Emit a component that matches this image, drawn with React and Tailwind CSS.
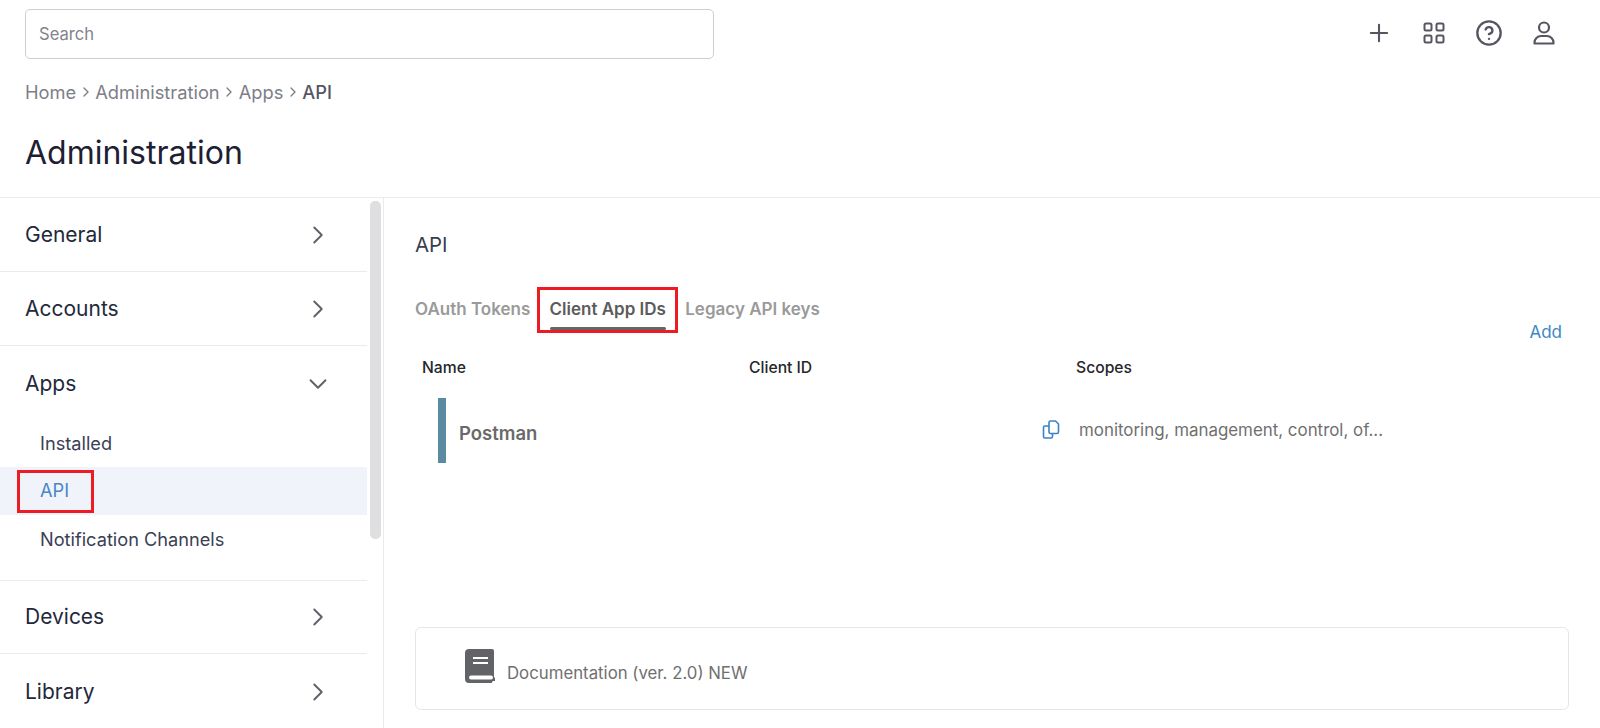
import { Plus, ChevronRight, ChevronDown, CircleHelp } from 'lucide-react';

function NavRow({ label, height = 'h-[73px] border-b border-[#ebebeb]' }) {
    return (
        <div className={`flex items-center justify-between pl-[25px] pr-[34px] ${height}`}>
            <span className="text-[21px] font-normal text-[#23283a]">{label}</span>
            <ChevronRight className="w-[30px] h-[30px] text-[#5f6068]" strokeWidth={1.5} />
        </div>
    );
}

function AppsIcon() {
    return (
        <svg width="22" height="22" viewBox="0 0 22 22" fill="none" stroke="#555662" strokeWidth="2">
            <rect x="1.500" y="1.500" width="7" height="7" rx="1.500" />
            <rect x="13.500" y="1.500" width="7" height="7" rx="1.500" />
            <rect x="1.500" y="13.500" width="7" height="7" rx="1.500" />
            <rect x="13.500" y="13.500" width="7" height="7" rx="1.500" />
        </svg>
    );
}

function UserIcon() {
    return (
        <svg width="22" height="24" viewBox="0 0 22 24" fill="none" stroke="#555662" strokeWidth="2.200">
            <circle cx="11" cy="6.500" r="5" />
            <path d="M1.500 22.500v-1a6.500 6.500 0 0 1 6.500-6.500h6a6.500 6.500 0 0 1 6.500 6.500v1z" strokeLinejoin="round" />
        </svg>
    );
}

function CopyIcon() {
    return (
        <svg width="18" height="20" viewBox="0 0 18 20" fill="none" stroke="#3b82c4" strokeWidth="1.600">
            <path d="M7 2.500a1.500 1.500 0 0 1 1.500-1.500h5l3 3v8a1.500 1.500 0 0 1-1.500 1.500h-6.500a1.500 1.500 0 0 1-1.500-1.500z" strokeLinejoin="round" />
            <path d="M7 6H3a1.500 1.500 0 0 0-1.500 1.500v9A1.500 1.500 0 0 0 3 18h6a1.500 1.500 0 0 0 1.500-1.500v-3" strokeLinejoin="round" />
        </svg>
    );
}

function BookIcon() {
    return (
        <svg width="30" height="34" viewBox="0 0 30 34">
            <path d="M4 0h23a2 2 0 0 1 2 2v26l1 1v3h-2l-1 1v1H4a4 4 0 0 1-4-4V4a4 4 0 0 1 4-4z" fill="#626366" />
            <rect x="8" y="8" width="15" height="2" fill="#fff" />
            <rect x="8" y="13" width="15" height="2" fill="#fff" />
            <rect x="4" y="26.500" width="24" height="4" rx="2" fill="#fff" />
        </svg>
    );
}

export default function App() {
    return (
        <div className="h-[728px] w-[1600px] overflow-hidden bg-white font-['Inter',sans-serif]">
            {/* Top bar */}
            <div className="flex items-start justify-between pl-[25px] pr-[29px] pt-[9px]">
                <div className="flex h-[50px] w-[689px] items-center rounded-[5px] border border-[#cfcfd2] pl-[13px] text-[16.600px] text-[#82838c]">
                    Search
                </div>
                <div className="flex items-center pt-[10px]">
                    <span className="flex w-[55px] justify-center"><Plus className="w-[28px] h-[28px] text-[#555662]" strokeWidth={1.800} /></span>
                    <span className="flex w-[55px] justify-center"><AppsIcon /></span>
                    <span className="flex w-[55px] justify-center"><CircleHelp className="w-[28px] h-[28px] text-[#555662]" strokeWidth={2} /></span>
                    <span className="flex w-[55px] justify-center"><UserIcon /></span>
                </div>
            </div>

            {/* Breadcrumb */}
            <div className="mt-[21px] flex items-center pl-[25px] text-[18.300px] leading-[24px] text-[#7d7e88]">
                <span>Home</span>
                <ChevronRight className="w-[16px] h-[16px] mx-[1.500px]" />
                <span>Administration</span>
                <ChevronRight className="w-[16px] h-[16px] mx-[1.500px]" />
                <span>Apps</span>
                <ChevronRight className="w-[16px] h-[16px] mx-[1.500px]" />
                <span className="font-medium text-[#555662]">API</span>
            </div>

            <h1 className="mt-[29px] pl-[25px] text-[32px] leading-[40px] font-normal text-[#1d2033]">Administration</h1>

            {/* Body */}
            <div className="mt-[24px] flex h-[532px] border-t border-[#ebebeb]">
                <div className="flex w-[384px] shrink-0 border-r border-[#ebebeb]">
                    <div className="w-[367px]">
                        <NavRow label="General" height="h-[74px] border-b border-[#ebebeb]" />
                        <NavRow label="Accounts" height="h-[74px] border-b border-[#ebebeb]" />
                        <div className="border-b border-[#ebebeb] pb-[17px]">
                            <div className="flex h-[75px] items-center justify-between pl-[25px] pr-[34px]">
                                <span className="text-[21px] font-normal text-[#23283a]">Apps</span>
                                <ChevronDown className="w-[30px] h-[30px] text-[#5f6068]" strokeWidth={1.500} />
                            </div>
                            <div className="flex h-[46px] items-center pl-[40px] text-[18.200px] text-[#3a4055]">Installed</div>
                            <div className="flex h-[48px] items-center bg-[#f0f4fa] pl-[17px]">
                                <div className="flex h-[43px] w-[77px] items-center border-[3px] border-[#ed1c24] pl-[20px] text-[18.200px] text-[#4a86c5]">API</div>
                            </div>
                            <div className="flex h-[48px] items-center pl-[40px] pt-[2px] text-[18.200px] text-[#3a4055]">Notification Channels</div>
                        </div>
                        <NavRow label="Devices" />
                        <NavRow label="Library" height="h-[75px]" />
                    </div>
                    <div className="ml-[3px] mt-[3px] h-[338px] w-[11px] rounded-[5px] bg-[#dfdfe2]" />
                </div>

                <div className="flex min-w-0 flex-1 flex-col pl-[31px]">
                    <div className="mt-[35px] text-[20.400px] leading-[24px] text-[#3a3d4d]">API</div>

                    {/* Tabs */}
                    <div className="mt-[30px] flex items-center text-[17px] font-semibold text-[#9a9a9a]">
                        <span>OAuth Tokens</span>
                        <div className="ml-[7px] flex h-[46px] w-[141px] flex-col items-center border-[3px] border-[#ed1c24] pt-[7px] text-[#5c5c5c]">
                            <span className="leading-[24px]">Client App IDs</span>
                            <span className="mt-[6px] h-[3px] w-[116px] rounded-sm bg-[#666666]" />
                        </div>
                        <span className="ml-[7px]">Legacy API keys</span>
                    </div>

                    <div className="flex justify-end pr-[38px] text-[17px] leading-[22px] text-[#3d86c6] -mt-[12px]">Add</div>

                    {/* Table */}
                    <div className="mt-[13px] flex pl-[7px] text-[15.700px] font-medium leading-[24px] text-[#26272b]">
                        <span className="w-[327px]">Name</span>
                        <span className="w-[327px]">Client ID</span>
                        <span>Scopes</span>
                    </div>
                    <div className="mt-[18px] flex">
                        <div className="ml-[23px] h-[65px] w-[8px] bg-[#5b8ba1]" />
                        <div className="ml-[13px] flex w-[583px] items-center pt-[6px] text-[18.500px] font-semibold text-[#6a6a6a]">Postman</div>
                        <div className="flex h-[65px] items-start pt-[22px]">
                            <CopyIcon />
                            <span className="ml-[19px] text-[16.900px] leading-[20px] text-[#6f6f6f]">monitoring, management, control, of...</span>
                        </div>
                    </div>

                    {/* Docs card */}
                    <div className="mt-[164px] flex h-[83px] w-[1154px] items-start rounded-[6px] border border-[#e6e6e6] pl-[49px] pt-[21px]">
                        <BookIcon />
                        <span className="ml-[12px] mt-[12px] text-[16.800px] leading-[24px] text-[#6f6f6f]">Documentation (ver. 2.0) NEW</span>
                    </div>
                </div>
            </div>
        </div>
    );
}
